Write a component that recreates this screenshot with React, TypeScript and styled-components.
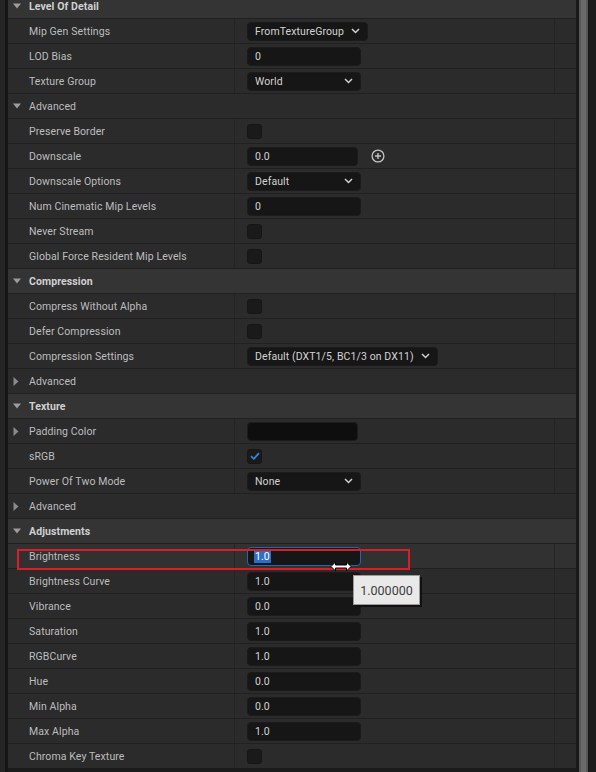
import React from 'react';
import styled, { createGlobalStyle } from 'styled-components';

const GlobalStyle = createGlobalStyle`
  html, body {
    margin: 0;
    padding: 0;
    background: #1b1b1b;
  }
  body {
    font-family: Roboto, 'Noto Sans', 'Liberation Sans', sans-serif;
  }
`;

type Widget =
  | { kind: 'dropdown'; value: string; width?: number }
  | { kind: 'number'; value: string; width?: number; plus?: boolean; focused?: boolean }
  | { kind: 'checkbox'; checked?: boolean }
  | { kind: 'color' };

type Item =
  | { type: 'category'; label: string }
  | { type: 'group'; label: string; open: boolean }
  | { type: 'prop'; label: string; widget: Widget; expander?: boolean; hover?: boolean };

const items: Item[] = [
  { type: 'category', label: 'Level Of Detail' },
  { type: 'prop', label: 'Mip Gen Settings', widget: { kind: 'dropdown', value: 'FromTextureGroup' } },
  { type: 'prop', label: 'LOD Bias', widget: { kind: 'number', value: '0' } },
  { type: 'prop', label: 'Texture Group', widget: { kind: 'dropdown', value: 'World', width: 114 } },
  { type: 'group', label: 'Advanced', open: true },
  { type: 'prop', label: 'Preserve Border', widget: { kind: 'checkbox' } },
  { type: 'prop', label: 'Downscale', widget: { kind: 'number', value: '0.0', width: 111, plus: true } },
  { type: 'prop', label: 'Downscale Options', widget: { kind: 'dropdown', value: 'Default', width: 114 } },
  { type: 'prop', label: 'Num Cinematic Mip Levels', widget: { kind: 'number', value: '0' } },
  { type: 'prop', label: 'Never Stream', widget: { kind: 'checkbox' } },
  { type: 'prop', label: 'Global Force Resident Mip Levels', widget: { kind: 'checkbox' } },
  { type: 'category', label: 'Compression' },
  { type: 'prop', label: 'Compress Without Alpha', widget: { kind: 'checkbox' } },
  { type: 'prop', label: 'Defer Compression', widget: { kind: 'checkbox' } },
  {
    type: 'prop',
    label: 'Compression Settings',
    widget: { kind: 'dropdown', value: 'Default (DXT1/5, BC1/3 on DX11)' },
  },
  { type: 'group', label: 'Advanced', open: false },
  { type: 'category', label: 'Texture' },
  { type: 'prop', label: 'Padding Color', widget: { kind: 'color' }, expander: true },
  { type: 'prop', label: 'sRGB', widget: { kind: 'checkbox', checked: true } },
  { type: 'prop', label: 'Power Of Two Mode', widget: { kind: 'dropdown', value: 'None', width: 114 } },
  { type: 'group', label: 'Advanced', open: false },
  { type: 'category', label: 'Adjustments' },
  { type: 'prop', label: 'Brightness', widget: { kind: 'number', value: '1.0', focused: true }, hover: true },
  { type: 'prop', label: 'Brightness Curve', widget: { kind: 'number', value: '1.0' } },
  { type: 'prop', label: 'Vibrance', widget: { kind: 'number', value: '0.0' } },
  { type: 'prop', label: 'Saturation', widget: { kind: 'number', value: '1.0' } },
  { type: 'prop', label: 'RGBCurve', widget: { kind: 'number', value: '1.0' } },
  { type: 'prop', label: 'Hue', widget: { kind: 'number', value: '0.0' } },
  { type: 'prop', label: 'Min Alpha', widget: { kind: 'number', value: '0.0' } },
  { type: 'prop', label: 'Max Alpha', widget: { kind: 'number', value: '1.0' } },
  { type: 'prop', label: 'Chroma Key Texture', widget: { kind: 'checkbox' } },
];

const Frame = styled.div`
  position: relative;
  display: flex;
  width: 596px;
  height: 772px;
  overflow: hidden;
  background: #1b1b1b;
`;

const Gutter = styled.div`
  width: 5px;
  background: #252525;
  border-right: 3px solid #161616;
`;

const Panel = styled.div`
  width: 568px;
  overflow: hidden;
`;

const List = styled.div`
  margin-top: -6px;
  display: flex;
  flex-direction: column;
  gap: 1px;
  background: #202020;
`;

const ScrollGap = styled.div`
  width: 3px;
  background: #191919;
`;

const ScrollThumb = styled.div`
  width: 9px;
  background: linear-gradient(90deg, #575757 0 2px, #6a6a6a 2px 7px, #575757 7px);
`;

const ScrollEdge = styled.div`
  flex: 1;
  background: #1d1d1d;
  border-left: 1px solid #151515;
`;

const BaseRow = styled.div`
  height: 24px;
  display: flex;
  align-items: center;
  font-size: 10.5px;
  letter-spacing: 0.1px;
  color: #bdbdbd;
`;

const CategoryRow = styled(BaseRow)`
  background: #343434;
  font-weight: 700;
  color: #d0d0d0;
  padding-left: 5px;
`;

const GroupRow = styled(BaseRow)`
  background: #2b2b2b;
  padding-left: 5px;
`;

const PropRow = styled(BaseRow)<{ $hover?: boolean }>`
  background: ${(p) => (p.$hover ? '#313131' : '#2b2b2b')};
  align-items: stretch;
`;

const NameCell = styled.div`
  width: 221px;
  display: flex;
  align-items: center;
  padding-left: 5px;
  border-right: 1px solid #242424;
  white-space: nowrap;
`;

const ValueCell = styled.div`
  width: 307px;
  display: flex;
  align-items: center;
  gap: 13px;
  padding-left: 12px;
  border-right: 1px solid #242424;
`;

const ResetCell = styled.div`
  flex: 1;
`;

const ArrowSlot = styled.span`
  width: 16px;
  display: flex;
  align-items: center;
  color: #9a9a9a;
`;

const Field = styled.div<{ $width?: number; $focused?: boolean }>`
  box-sizing: border-box;
  height: 19px;
  ${(p) => (p.$width ? `width: ${p.$width}px;` : '')}
  display: flex;
  align-items: center;
  justify-content: space-between;
  gap: 7px;
  padding: 0 7px;
  background: #161616;
  border: 1px solid ${(p) => (p.$focused ? '#2a64ad' : '#1b1b1b')};
  border-radius: 4px;
  color: #d2d2d2;
  font-size: 10.5px;
  white-space: nowrap;
`;

const Selected = styled.span`
  background: #2d6fc4;
  color: #ffffff;
  padding: 0 1px;
  margin-left: -1px;
`;

const Check = styled.div`
  width: 15px;
  height: 15px;
  box-sizing: border-box;
  border-radius: 3px;
  background: #1a1a1a;
  border: 1px solid #161616;
  display: flex;
  align-items: center;
  justify-content: center;
`;

const ColorSwatch = styled.div`
  width: 111px;
  height: 19px;
  border-radius: 4px;
  background: #0e0e0e;
  border: 1px solid #1c1c1c;
  box-sizing: border-box;
`;

const Highlight = styled.div`
  position: absolute;
  left: 17px;
  top: 549px;
  width: 393px;
  height: 21px;
  box-sizing: border-box;
  border: 2px solid #dc1c28;
  pointer-events: none;
`;

const Tooltip = styled.div`
  position: absolute;
  left: 353px;
  top: 575px;
  width: 67px;
  height: 30px;
  box-sizing: border-box;
  display: flex;
  align-items: center;
  justify-content: center;
  background: #e9e9e9;
  border: 1px solid #9a9a9a;
  box-shadow: 2px 2px 0 #111;
  color: #3c3c3c;
  font-size: 12.5px;
  font-family: Roboto, 'Liberation Sans', sans-serif;
`;

const Cursor = styled.svg`
  position: absolute;
  left: 330px;
  top: 561px;
`;

function Triangle({ open }: { open: boolean }) {
  return open ? (
    <svg width="8" height="6" viewBox="0 0 8 6">
      <path d="M0 0.5 H8 L4 5.5 Z" fill="#9c9c9c" />
    </svg>
  ) : (
    <svg width="6" height="9" viewBox="0 0 6 9">
      <path d="M0.5 0 V9 L5.5 4.5 Z" fill="#8a8a8a" />
    </svg>
  );
}

function Chevron() {
  return (
    <svg width="9" height="6" viewBox="0 0 9 6">
      <path d="M1 1 L4.5 4.5 L8 1" fill="none" stroke="#d0d0d0" strokeWidth="1.5" />
    </svg>
  );
}

function PlusCircle() {
  return (
    <svg width="14" height="14" viewBox="0 0 14 14">
      <circle cx="7" cy="7" r="5.9" fill="none" stroke="#c4c4c4" strokeWidth="1.3" />
      <path d="M7 4 V10 M4 7 H10" stroke="#c4c4c4" strokeWidth="1.4" />
    </svg>
  );
}

function renderWidget(w: Widget) {
  switch (w.kind) {
    case 'dropdown':
      return (
        <Field $width={w.width}>
          <span>{w.value}</span>
          <Chevron />
        </Field>
      );
    case 'number':
      return (
        <>
          <Field $width={w.width ?? 114} $focused={w.focused}>
            {w.focused ? <Selected>{w.value}</Selected> : <span>{w.value}</span>}
          </Field>
          {w.plus && <PlusCircle />}
        </>
      );
    case 'checkbox':
      return (
        <Check>
          {w.checked && (
            <svg width="10" height="8" viewBox="0 0 10 8">
              <path d="M1 4.2 L3.8 6.8 L9 1.2" fill="none" stroke="#2f86e0" strokeWidth="1.8" />
            </svg>
          )}
        </Check>
      );
    case 'color':
      return <ColorSwatch />;
  }
}

export default function App() {
  return (
    <>
      <GlobalStyle />
      <Frame>
        <Gutter />
        <Panel>
          <List>
            {items.map((item, i) => {
              if (item.type === 'category') {
                return (
                  <CategoryRow key={i}>
                    <ArrowSlot>
                      <Triangle open />
                    </ArrowSlot>
                    {item.label}
                  </CategoryRow>
                );
              }
              if (item.type === 'group') {
                return (
                  <GroupRow key={i}>
                    <ArrowSlot>
                      <Triangle open={item.open} />
                    </ArrowSlot>
                    {item.label}
                  </GroupRow>
                );
              }
              return (
                <PropRow key={i} $hover={item.hover}>
                  <NameCell>
                    <ArrowSlot>{item.expander && <Triangle open={false} />}</ArrowSlot>
                    {item.label}
                  </NameCell>
                  <ValueCell>{renderWidget(item.widget)}</ValueCell>
                  <ResetCell />
                </PropRow>
              );
            })}
          </List>
        </Panel>
        <ScrollGap />
        <ScrollThumb />
        <ScrollEdge />
        <Highlight />
        <Tooltip>1.000000</Tooltip>
        <Cursor width="22" height="11" viewBox="0 0 22 11">
          <path
            d="M1 5.5 L5.5 1 V4 H16.5 V1 L21 5.5 L16.5 10 V7 H5.5 V10 Z"
            fill="#ffffff"
            stroke="#000000"
            strokeWidth="1"
            strokeLinejoin="round"
          />
        </Cursor>
      </Frame>
    </>
  );
}
